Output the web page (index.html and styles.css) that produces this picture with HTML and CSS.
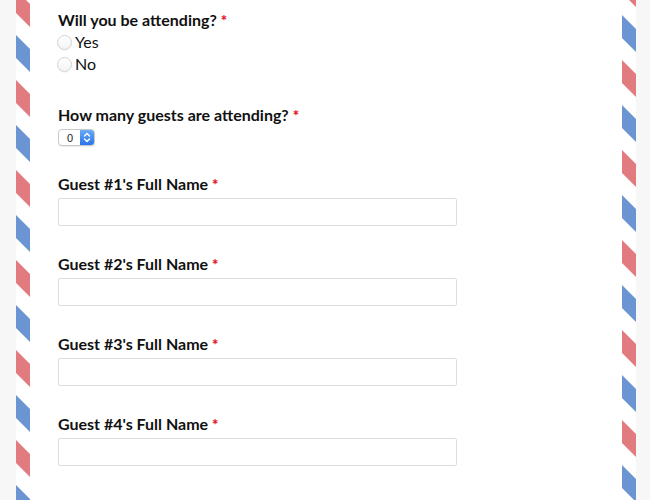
FILE: index.html
```html
<!DOCTYPE html>
<html>
<head>
    <title>RSVP</title>
    <link rel="stylesheet" href="styles.css">
</head>
<body>
<div class="envelope">
  <div class="stripe stripe-left"></div>

  <form class="letter" name="rsvpForm">

    <div class="field field-choice">
      <div class="field-label">Will you be attending? <span class="req">*</span></div>
      <div class="options">
        <label class="option"><input type="radio" name="attending" value="yes"> Yes</label>
        <label class="option"><input type="radio" name="attending" value="no"> No</label>
      </div>
    </div>

    <div class="field">
      <label class="field-label" for="guests">How many guests are attending? <span class="req">*</span></label>
      <div class="count">
        <select id="guests" name="guests">
          <option>0</option>
          <option>1</option>
          <option>2</option>
          <option>3</option>
          <option>4</option>
        </select>
        <span class="count-arrows">
          <svg width="8" height="11" viewBox="0 0 8 11"><path d="M1.5 4 L4 1.5 L6.5 4 M1.5 7 L4 9.5 L6.5 7" fill="none" stroke="#fff" stroke-width="1.4" stroke-linecap="round" stroke-linejoin="round"/></svg>
        </span>
      </div>
    </div>

    <div class="field">
      <label class="field-label" for="guest1">Guest #1's Full Name <span class="req">*</span></label>
      <input class="text-input" type="text" id="guest1" name="guest1">
    </div>

    <div class="field">
      <label class="field-label" for="guest2">Guest #2's Full Name <span class="req">*</span></label>
      <input class="text-input" type="text" id="guest2" name="guest2">
    </div>

    <div class="field">
      <label class="field-label" for="guest3">Guest #3's Full Name <span class="req">*</span></label>
      <input class="text-input" type="text" id="guest3" name="guest3">
    </div>

    <div class="field">
      <label class="field-label" for="guest4">Guest #4's Full Name <span class="req">*</span></label>
      <input class="text-input" type="text" id="guest4" name="guest4">
    </div>

  </form>

  <div class="stripe stripe-right"></div>
</div>
</body>
</html>
```

FILE: styles.css
```css
* {
    box-sizing: border-box;
}

html, body {
    margin: 0;
    padding: 0;
    height: 100%;
    overflow: hidden;
}

body {
    padding: 0 14px 0 16px;
    background: #f7f7f7;
    font-family: Lato, "Liberation Sans", Arial, sans-serif;
    font-size: 16px;
    color: #111;
}

.envelope {
    display: flex;
    min-height: 100vh;
    background: #fff;
}

/* airmail border */
.stripe {
    flex: 0 0 14px;
    background-color: #fff;
    background-image: repeating-linear-gradient(45deg,
        #e27b80 0, #e27b80 12.5%,
        transparent 0, transparent 25%,
        #6a94d2 0, #6a94d2 37.5%,
        transparent 0, transparent 50%);
    background-size: 90px 90px;
}

.stripe-left {
    background-position: 0 12.5px;
}

.stripe-right {
    background-position: 0 -7.5px;
}

.letter {
    flex: 1;
    padding: 10px 28px 0;
    background: #fff;
}

.field {
    margin-bottom: 28px;
}

.field-choice {
    margin-bottom: 33px;
}

.field-label {
    display: block;
    line-height: 20px;
    margin-bottom: 4px;
    font-weight: 700;
}

.req {
    color: #e3141e;
    font-size: 15px;
    font-weight: 900;
}

.options {
    display: flex;
    flex-direction: column;
    gap: 6px;
}

.option {
    display: flex;
    align-items: center;
    gap: 3px;
    line-height: 16px;
}

.option input {
    appearance: none;
    -webkit-appearance: none;
    width: 15px;
    height: 15px;
    margin: 0 0 0 -1px;
    border: 1px solid #d3d3d3;
    border-radius: 50%;
    background: linear-gradient(#fff, #f4f4f4);
    box-shadow: 0 1px 1px rgba(0, 0, 0, 0.04);
}

.count {
    display: flex;
    height: 17px;
    width: 37px;
    border: 1px solid #cacaca;
    border-radius: 4px;
    overflow: hidden;
    background: #fff;
    box-shadow: 0 1px 1px rgba(0, 0, 0, 0.08);
}

.count select {
    appearance: none;
    -webkit-appearance: none;
    flex: 1;
    min-width: 0;
    border: none;
    outline: none;
    padding: 0 0 0 8px;
    background: transparent;
    font-family: "Liberation Sans", Arial, sans-serif;
    font-size: 11px;
    color: #222;
}

.count-arrows {
    display: flex;
    align-items: center;
    justify-content: center;
    width: 14px;
    background: linear-gradient(#6aaaf7, #2b74ea);
}

.text-input {
    display: block;
    width: 399px;
    height: 28px;
    padding: 4px 8px;
    border: 1px solid #dedede;
    border-radius: 2px;
    background: #fff;
    outline: none;
    font: inherit;
}
```
